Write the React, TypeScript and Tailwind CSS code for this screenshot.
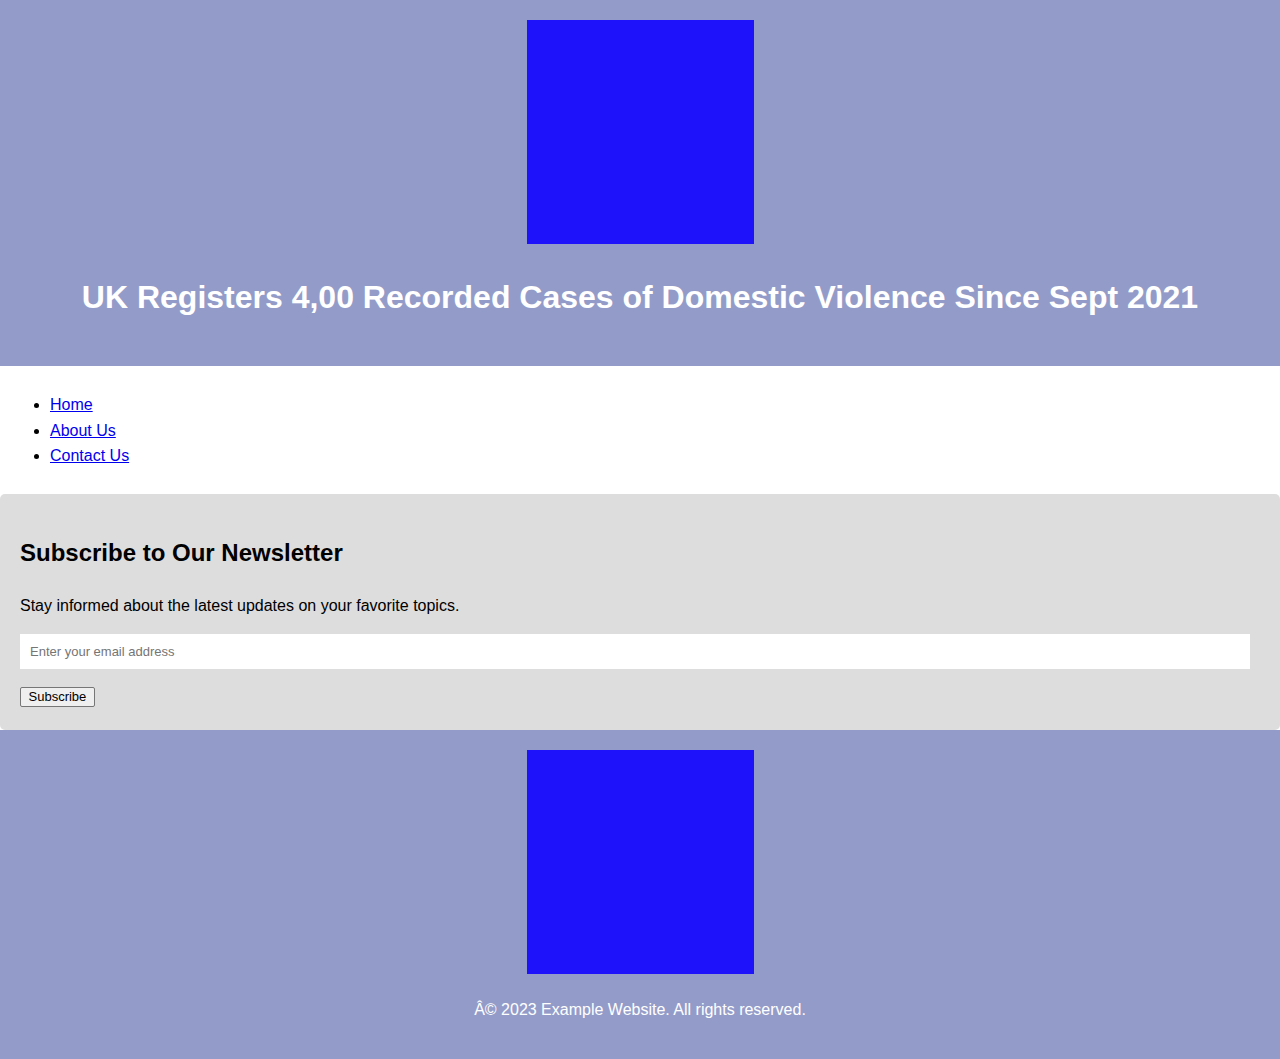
import React from 'react';

export default function App() {
  return (
    <div className="min-h-screen bg-white text-black font-['Liberation_Sans',Arial,sans-serif] text-[16px]">
      {/* Header */}
      <header className="bg-[#939cc9] flex flex-col items-center pt-[20px] pb-[50px]">
        <div className="w-[227px] h-[224px] bg-[#1e12fa]" />
        <h1 className="mt-[35px] text-[32px] leading-[37px] font-bold text-white text-center">
          UK Registers 4,00 Recorded Cases of Domestic Violence Since Sept 2021
        </h1>
      </header>

      {/* Nav */}
      <nav>
        <ul className="list-disc pl-[50px] pt-[26px] pb-[25px]">
          <li className="leading-[25.6px]">
            <a href="#" className="text-[#0000ee] underline">Home</a>
          </li>
          <li className="leading-[25.6px]">
            <a href="#" className="text-[#0000ee] underline">About Us</a>
          </li>
          <li className="leading-[25.6px]">
            <a href="#" className="text-[#0000ee] underline">Contact Us</a>
          </li>
        </ul>
      </nav>

      {/* Newsletter */}
      <section className="bg-[#dddddd] rounded-[5px] px-[20px] pt-[20px] pb-[23px]">
        <h2 className="mt-[20px] text-[24px] leading-[38.4px] font-bold">Subscribe to Our Newsletter</h2>
        <p className="mt-[21px] leading-[25.6px]">Stay informed about the latest updates on your favorite topics.</p>
        <input
          type="email"
          placeholder="Enter your email address"
          className="block mt-[15px] h-[35px] w-[1230px] bg-white px-[10px] text-[13px] placeholder:text-[#757575] outline-none"
        />
        <button className="block mt-[18px] h-[20px] px-[7.5px] text-[13px] leading-[16px] bg-[#efefef] border border-[#767676] rounded-[2px]">
          Subscribe
        </button>
      </section>

      {/* Footer */}
      <footer className="bg-[#939cc9] flex flex-col items-center pt-[20px] pb-[37px]">
        <div className="w-[227px] h-[224px] bg-[#1e12fa]" />
        <p className="mt-[23px] leading-[25.6px] text-white">Â© 2023 Example Website. All rights reserved.</p>
      </footer>
    </div>
  );
}
